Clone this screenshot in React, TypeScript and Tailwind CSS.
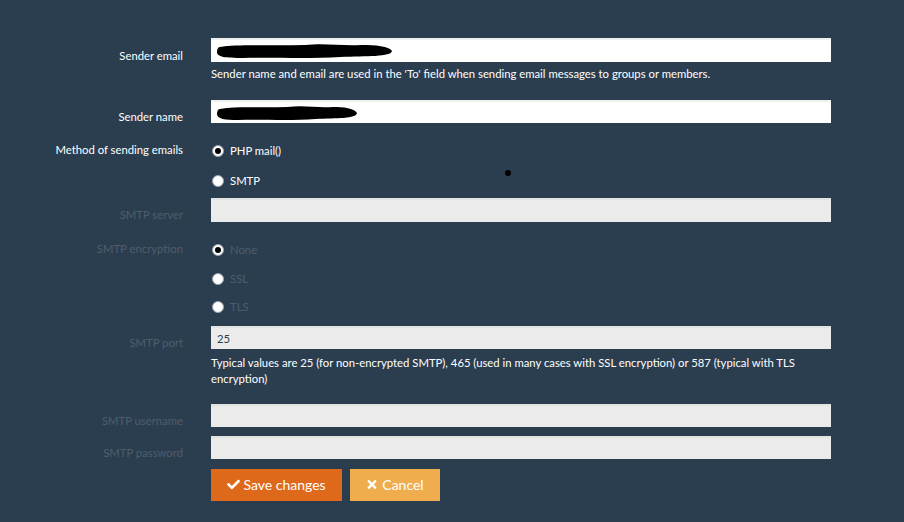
import { FaCheck, FaTimes } from "react-icons/fa";

const font = { fontFamily: "Lato, 'Open Sans', sans-serif" };

const Label = ({ text, dim, pt = "pt-0" }: { text: string; dim?: boolean; pt?: string }) => (
  <div className={`w-[183px] shrink-0 text-right leading-[13px] ${pt} ${dim ? "text-[#4e5d6c]" : "text-white"}`}>{text}</div>
);

const Input = ({ disabled, children, h = "h-[24px]" }: { disabled?: boolean; children?: React.ReactNode; h?: string }) => (
  <div
    className={`w-[620px] ${h} border-t-2 flex items-center px-[6px] text-[#2b3e50] ${
      disabled ? "bg-[#ebebeb] border-[#e3e3e3]" : "bg-white border-[#f0f0f0]"
    }`}
  >
    {children}
  </div>
);

const Radio = ({ label, checked, dim, mt = "mt-0" }: { label: string; checked?: boolean; dim?: boolean; mt?: string }) => (
  <div className={`h-[20px] flex items-center ${mt}`}>
    <span className="ml-[1px] w-[12px] h-[12px] rounded-full bg-white border border-[#9aa3ab] flex items-center justify-center">
      {checked && <span className="w-[6px] h-[6px] rounded-full bg-black" />}
    </span>
    <span className={`ml-[6px] leading-[16px] ${dim ? "text-[#4e5d6c]" : "text-white"}`}>{label}</span>
  </div>
);

const Scribble = ({ w }: { w: number }) => (
  <svg width={w} height="16" viewBox={`0 0 ${w} 16`}>
    <path
      d={`M3 4 C20 1 ${w * 0.3} 3 ${w * 0.5} 2 C${w * 0.62} 0 ${w * 0.7} 3 ${w * 0.82} 2 C${w * 0.9} 2 ${w - 4} 3 ${w - 1} 8 C${w - 2} 14 ${w * 0.85} 13 ${w * 0.7} 14 C${w * 0.5} 16 ${w * 0.3} 14 ${w * 0.15} 15 C8 15 0 14 0 9 C0 6 1 4 3 4 Z`}
      fill="black"
    />
  </svg>
);

export default function App() {
  return (
    <div className="relative w-[904px] h-[522px] bg-[#2b3e50] pt-[38px] text-[11.3px] overflow-hidden" style={font}>
      <span className="absolute left-[505px] top-[170px] w-[6px] h-[6px] rounded-full bg-black" />

      <div className="flex gap-[28px]">
        <Label text="Sender email" pt="pt-[11px]" />
        <div>
          <Input>
            <Scribble w={176} />
          </Input>
          <div className="mt-[4px] leading-[16px] text-white">
            Sender name and email are used in the 'To' field when sending email messages to groups or members.
          </div>
        </div>
      </div>

      <div className="flex gap-[28px] mt-[18px]">
        <Label text="Sender name" pt="pt-[10px]" />
        <Input h="h-[23px]">
          <Scribble w={141} />
        </Input>
      </div>

      <div className="flex gap-[28px] mt-[18px]">
        <Label text="Method of sending emails" pt="pt-[2px]" />
        <div>
          <Radio label="PHP mail()" checked />
          <Radio label="SMTP" mt="mt-[10px]" />
        </div>
      </div>

      <div className="flex gap-[28px] mt-[7px]">
        <Label text="SMTP server" dim pt="pt-[10px]" />
        <Input disabled />
      </div>

      <div className="flex gap-[28px] mt-[18px]">
        <Label text="SMTP encryption" dim pt="pt-[2px]" />
        <div>
          <Radio label="None" checked dim />
          <Radio label="SSL" dim mt="mt-[9px]" />
          <Radio label="TLS" dim mt="mt-[8px]" />
        </div>
      </div>

      <div className="flex gap-[28px] mt-[9px]">
        <Label text="SMTP port" dim pt="pt-[10px]" />
        <div>
          <Input disabled h="h-[23px]">
            <span className="leading-[16px]">25</span>
          </Input>
          <div className="w-[620px] mt-[6px] leading-[16px] text-white">
            Typical values are 25 (for non-encrypted SMTP), 465 (used in many cases with SSL encryption) or 587 (typical with TLS
            encryption)
          </div>
        </div>
      </div>

      <div className="flex gap-[28px] mt-[17px]">
        <Label text="SMTP username" dim pt="pt-[10px]" />
        <Input disabled h="h-[23px]" />
      </div>

      <div className="flex gap-[28px] mt-[9px]">
        <Label text="SMTP password" dim pt="pt-[10px]" />
        <Input disabled h="h-[23px]" />
      </div>

      <div className="flex gap-[28px] mt-[10px]">
        <div className="w-[183px] shrink-0" />
        <div className="flex gap-[8px]">
          <button className="w-[131px] h-[32px] pb-[2px] bg-[#df691a] text-white text-[14px] flex items-center justify-center gap-[3px]">
            <FaCheck className="w-[13px] h-[13px]" />
            Save changes
          </button>
          <button className="w-[90px] h-[32px] pb-[2px] bg-[#f0ad4e] text-white text-[14px] flex items-center justify-center gap-[4px]">
            <FaTimes className="w-[12px] h-[13px]" />
            Cancel
          </button>
        </div>
      </div>
    </div>
  );
}
